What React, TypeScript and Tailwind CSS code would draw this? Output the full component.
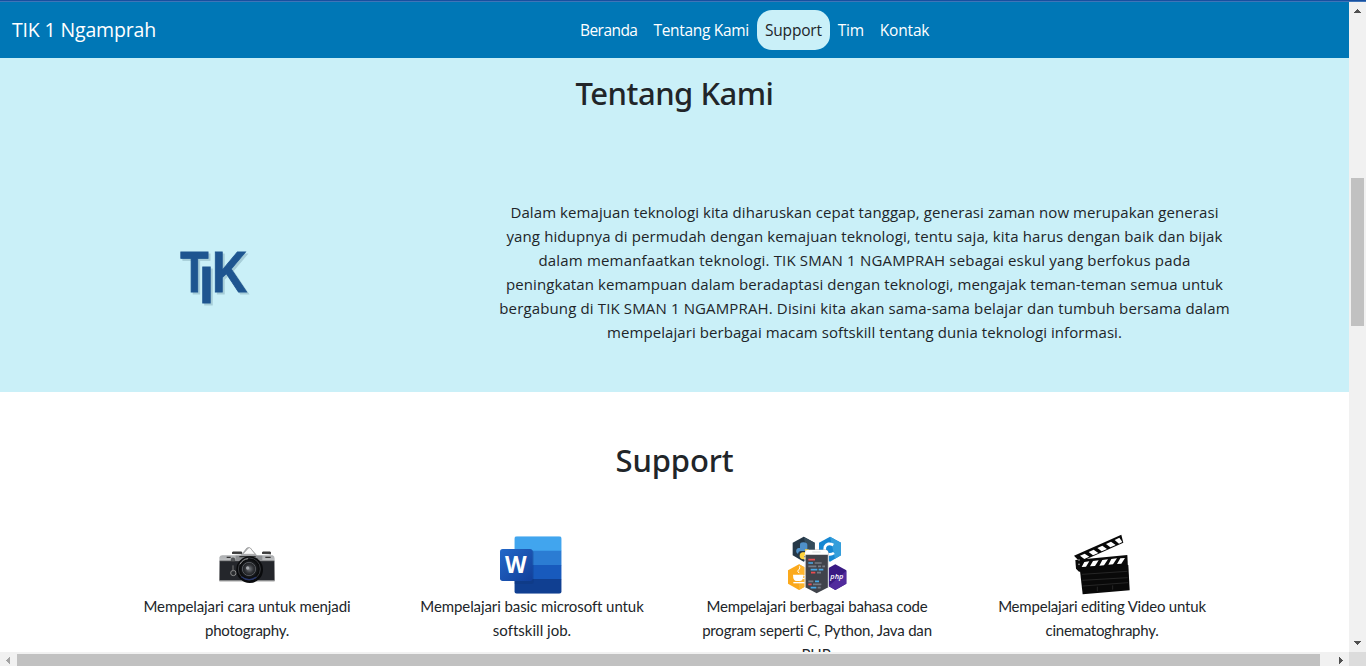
import { useLayoutEffect, useRef } from 'react';

/** One line of text whose tracking is adjusted to the given width. */
function Line({ text, width }: { text: string; width: number }) {
  const ref = useRef<HTMLSpanElement>(null);
  useLayoutEffect(() => {
    const el = ref.current;
    if (!el) return;
    el.style.letterSpacing = '0px';
    const natural = el.getBoundingClientRect().width;
    const gap = (width - natural) / text.length;
    el.style.letterSpacing = `${gap}px`;
  }, [text, width]);
  return (
    <span className="block whitespace-nowrap">
      <span ref={ref} className="inline-block">{text}</span>
    </span>
  );
}

const links = [
  { label: 'Beranda', width: 57.4 },
  { label: 'Tentang Kami', width: 95.6 },
  { label: 'Support', width: 56.8, active: true },
  { label: 'Tim', width: 26 },
  { label: 'Kontak', width: 49.5 },
];

const about = [
  { text: 'Dalam kemajuan teknologi kita diharuskan cepat tanggap, generasi zaman now merupakan generasi', width: 708 },
  { text: 'yang hidupnya di permudah dengan kemajuan teknologi, tentu saja, kita harus dengan baik dan bijak', width: 716 },
  { text: 'dalam memanfaatkan teknologi. TIK SMAN 1 NGAMPRAH sebagai eskul yang berfokus pada', width: 652 },
  { text: 'peningkatan kemampuan dalam beradaptasi dengan teknologi, mengajak teman-teman semua untuk', width: 717 },
  { text: 'bergabung di TIK SMAN 1 NGAMPRAH. Disini kita akan sama-sama belajar dan tumbuh bersama dalam', width: 730.5 },
  { text: 'mempelajari berbagai macam softskill tentang dunia teknologi informasi.', width: 515 },
];

function TikLogo() {
  return (
    <svg
      className="overflow-visible drop-shadow-[2.5px_2.5px_0.5px_rgba(60,100,120,0.25)]"
      width="75"
      height="65"
      viewBox="0 0 75 65"
      fill="#1e5590"
      stroke="#1e5590"
      strokeWidth="0.9"
      fontFamily="Liberation Sans, sans-serif"
      fontWeight="700"
    >
      <text transform="translate(.3 45) scale(.8 1)" fontSize="58">T</text>
      <text transform="translate(19.2 56.3)" fontSize="52">I</text>
      <text transform="translate(32 45) scale(.84 1)" fontSize="58">K</text>
    </svg>
  );
}

function Camera() {
  return (
    <svg width="85" height="60" viewBox="0 0 255 180">
      <defs>
        <linearGradient id="metal" x2="0" y2="1">
          <stop stopColor="#8e9092" /><stop offset=".45" stopColor="#c6c8ca" /><stop offset="1" stopColor="#777" />
        </linearGradient>
        <radialGradient id="lens">
          <stop stopColor="#777b80" /><stop offset=".35" stopColor="#36383c" /><stop offset=".65" stopColor="#17191c" /><stop offset="1" stopColor="#050607" />
        </radialGradient>
      </defs>
      <path d="M83 57v-6h27v7M173 57v-6h23v7" fill="#444" stroke="#333" strokeWidth="3" />
      <path d="M43 67q2-6 9-6h55l17-21q6-6 13 0l19 21h47q6 2 6 10v68H43z" fill="url(#metal)" />
      <path d="M113 58l17-19q3-2 6 0l15 19z" fill="#fafafa" stroke="#aaa" strokeWidth="3" />
      <path d="M44 78h164v57H44z" fill="#24262b" />
      <path d="M44 77h164M44 137h164" stroke="#8b8c8e" strokeWidth="3" />
      <path d="M92 62h80v15H92z" fill="#8d8f92" />
      <path d="M103 65h49M65 67h12M181 67h16" stroke="#333" strokeWidth="4" />
      <circle cx="84" cy="74" r="6" fill="#57595c" stroke="#222" />
      <circle cx="85" cy="114" r="8" fill="#292b2e" stroke="#888" strokeWidth="3" />
      <path d="M84 91v18" stroke="#777" strokeWidth="3" />
      <circle cx="134" cy="104" r="40" fill="#090a0c" />
      <circle cx="133" cy="102" r="33" fill="url(#lens)" stroke="#393b40" strokeWidth="3" />
      <circle cx="132" cy="102" r="20" fill="none" stroke="#56595e" strokeWidth="3" />
      <path d="M105 88q8-15 24-17" fill="none" stroke="#999" strokeWidth="3" />
      <circle cx="128" cy="99" r="5" fill="#a7aaae" />
      <path d="M109 125q23 17 45 1" fill="none" stroke="#27366b" strokeWidth="4" />
    </svg>
  );
}

function Word() {
  return (
    <svg width="85" height="70" viewBox="0 0 255 210">
      <defs>
        <clipPath id="page"><rect x="73" y="19" width="142" height="172" rx="7" /></clipPath>
        <linearGradient id="tile" x2="1" y2="1"><stop stopColor="#2368c8" /><stop offset="1" stopColor="#123f9a" /></linearGradient>
      </defs>
      <g clipPath="url(#page)">
        <path d="M73 19h142v44H73z" fill="#41a5ee" />
        <path d="M73 62h142v44H73z" fill="#2b7cd3" />
        <path d="M73 105h142v43H73z" fill="#185abd" />
        <path d="M73 147h142v44H73z" fill="#103f91" />
        <rect x="70" y="61" width="61" height="101" rx="7" fill="#0a316f" opacity=".25" />
      </g>
      <rect x="30" y="57" width="98" height="96" rx="8" fill="url(#tile)" />
      <text x="45" y="130" textLength="65" lengthAdjust="spacingAndGlyphs" fontFamily="Open Sans, sans-serif" fontSize="69" fontWeight="700" fill="#fff">W</text>
    </svg>
  );
}

function Languages() {
  return (
    <svg width="85" height="70" viewBox="0 0 255 210">
      <path d="M86 20l33 18v38l-33 19-33-19V38z" fill="#253746" />
      <path d="M86 20l33 18v38l-18 10z" fill="#344c5c" />
      <path d="M75 54V44q0-7 10-7 12 0 12 8v10q0 8-9 8H77q-7 0-8 8-7-3-5-12 2-6 11-6h13" fill="#4f91c9" />
      <path d="M90 58h10q5 1 5 10 0 10-6 10H87v4h12q-2 8-14 6-11-1-11-10 0-9 8-11h8z" fill="#ffd33d" />
      <path d="M165 20l33 18v38l-33 19-33-19V38z" fill="#1687d2" />
      <path d="M165 20l33 18v38l-18 10z" fill="#349edb" />
      <path d="M175 45q-18-9-25 5-5 20 12 23 8 1 15-4" fill="none" stroke="#fff" strokeWidth="8" />
      <path d="M72 103l33 18v40l-33 19-33-19v-40z" fill="#fba91c" />
      <path d="M72 103l33 18v40l-33 19z" fill="#ffb52e" />
      <path d="M54 134h31q0 19-11 19h-9q-11 0-11-19" fill="#fff" />
      <path d="M85 137h6q3 9-8 9M72 129q-8-6 0-11 5-4 1-9" fill="none" stroke="#fff" strokeWidth="3" />
      <path d="M55 158h34" stroke="#fff" strokeWidth="4" />
      <path d="M181 103l33 18v40l-33 19-33-19v-40z" fill="#391a83" />
      <path d="M214 122v39l-33 19-20-12z" fill="#512b9d" />
      <path d="M91 68q0-9 10-9h49q10 0 10 9v104l-35 18-34-18z" fill="#40434b" />
      <path d="M90 74v-6q0-9 10-9h50q10 0 10 9v6z" fill="#fff" />
      <path d="M90 74v97M160 74v97" stroke="#e7eaf0" strokeWidth="3" />
      <path d="M112 66h25" stroke="#ddd" strokeWidth="3" />
      <g strokeWidth="5">
        <path d="M100 89h20M108 128h13M100 163h10" stroke="#e84c50" />
        <path d="M100 99h14M107 119h20M131 119h14M120 154h12M107 173h17" stroke="#49a9e8" />
        <path d="M119 99h21M100 109h24M129 109h9M142 109h8M126 128h12M100 154h15M114 163h25M128 173h9" stroke="#777c87" />
      </g>
      <text x="166" y="147" textLength="39" lengthAdjust="spacingAndGlyphs" fontFamily="Open Sans, sans-serif" fontSize="22" fontStyle="italic" fontWeight="600" fill="#fff">php</text>
    </svg>
  );
}

function Clapper() {
  return (
    <svg width="85" height="70" viewBox="0 0 255 210">
      <path d="M42 77L184 14l6 24L60 96z" fill="#080808" />
      <g fill="#fff">
        <path d="M60 77l14-6 14 9-15 7zM86 66l15-7 14 10-16 7zM112 54l15-7 14 10-16 7zM138 42l15-7 14 10-16 7zM164 30l14-7 9 13-10 5z" />
      </g>
      <path d="M46 90l156-15 2 42-147 8-9-9z" fill="#090909" />
      <g fill="#fff">
        <path d="M73 96l15-2-10 16-13 1zM99 93l17-2-11 17-15 1zM127 90l17-2-12 18-14 1zM154 87l17-2-12 18-14 1zM181 85l14-1-11 17-13 1z" />
      </g>
      <path d="M59 113l146-8 4 76-141 12z" fill="#090909" />
      <path d="M66 133l136-9M67 151l136-8M68 168l136-10M112 170v14M158 166v13" stroke="#353535" strokeWidth="2" />
      <circle cx="57" cy="90" r="2.5" fill="#aaa" /><circle cx="57" cy="103" r="2.5" fill="#aaa" />
    </svg>
  );
}

const supports = [
  { icon: <Camera />, pad: 'pt-[5px]', lines: [{ text: 'Mempelajari cara untuk menjadi', width: 207 }, { text: 'photography.', width: 84 }] },
  { icon: <Word />, pad: '', lines: [{ text: 'Mempelajari basic microsoft untuk', width: 223 }, { text: 'softskill job.', width: 78 }] },
  { icon: <Languages />, pad: '', lines: [{ text: 'Mempelajari berbagai bahasa code', width: 221 }, { text: 'program seperti C, Python, Java dan', width: 230 }, { text: 'PHP.', width: 31 }] },
  { icon: <Clapper />, pad: '', lines: [{ text: 'Mempelajari editing Video untuk', width: 208 }, { text: 'cinematoghraphy.', width: 113 }] },
];

function VerticalScrollbar() {
  return (
    <div className="flex w-[17px] shrink-0 flex-col items-center bg-[#f1f1f1]">
      <svg width="17" height="17" shapeRendering="crispEdges"><path d="M5 11h7v-1h-1V9h-1V8H9V7H8v1H7v1H6v1H5z" fill="#505050" /></svg>
      <div className="mt-[159px] h-[148px] w-[13px] bg-[#c1c1c1]" />
      <svg className="mt-auto" width="17" height="17" shapeRendering="crispEdges"><path d="M5 6h7v1h-1v1h-1v1H9v1H8V9H7V8H6V7H5z" fill="#505050" /></svg>
    </div>
  );
}

function HorizontalScrollbar() {
  return (
    <div className="flex h-[14px] shrink-0 bg-[#f1f1f1]">
      <svg width="17" height="14" shapeRendering="crispEdges"><path d="M10 5v7H9v-1H8v-1H7V9H6V8h1V7h1V6h1V5z" fill="#a3a3a3" /></svg>
      <div className="mt-[2px] h-3 w-[1303px] bg-[#c1c1c1]" />
      <svg className="ml-auto" width="17" height="14" shapeRendering="crispEdges"><path d="M7 5v7h1v-1h1v-1h1V9h1V8h-1V7H9V6H8V5z" fill="#505050" /></svg>
      <div className="w-[17px] bg-[#dcdcdc]" />
    </div>
  );
}

export default function App() {
  return (
    <div className="flex h-[666px] w-[1366px] flex-col overflow-hidden bg-white font-['Open_Sans',sans-serif] text-[#212529]">
      <div className="h-[2px] shrink-0 border-b border-[#3f74b8] bg-[#1750a0]" />
      <div className="flex min-h-0 flex-1">
        <main className="flex min-w-0 flex-1 flex-col overflow-hidden">
          <nav className="flex h-14 shrink-0 items-center bg-[#0077b6] text-white">
            <div className="w-[572px] pl-3 text-[19.5px] leading-[30px]">
              <Line text="TIK 1 Ngamprah" width={144} />
            </div>
            {links.map((l) => (
              <a
                key={l.label}
                className={
                  l.active
                    ? 'rounded-[15px] bg-[#caf0f8] px-2 py-2 text-[15.5px] leading-6 text-[#212529]'
                    : 'px-2 py-2 text-[15.5px] leading-6'
                }
              >
                <Line text={l.label} width={l.width} />
              </a>
            ))}
          </nav>

          <section className="flex h-[334px] shrink-0 flex-col bg-[#caf0f8]">
            <h2 className="mt-4 text-center font-['Noto_Sans',sans-serif] text-[31px] leading-[38px] font-medium">
              <Line text="Tentang Kami" width={198} />
            </h2>
            <div className="mx-auto mt-[88px] flex w-[1140px]">
              <div className="w-[380px] pt-[47px] pl-[75px]">
                <TikLogo />
              </div>
              <p className="w-[760px] text-center text-[15px] leading-6">
                {about.map((l) => <Line key={l.text} {...l} />)}
              </p>
            </div>
          </section>

          <section className="flex shrink-0 flex-col">
            <h2 className="mt-[49px] text-center font-['Noto_Sans',sans-serif] text-[31px] leading-[38px] font-medium">
              <Line text="Support" width={118} />
            </h2>
            <div className="mx-auto mt-[51px] flex w-[1140px]">
              {supports.map((s, i) => (
                <div key={i} className="flex w-[285px] flex-col items-center">
                  <div className={`h-16 ${s.pad}`}>{s.icon}</div>
                  <p className="text-center font-['Lato',sans-serif] text-[15px] leading-6">
                    {s.lines.map((l) => <Line key={l.text} {...l} />)}
                  </p>
                </div>
              ))}
            </div>
          </section>
        </main>
        <VerticalScrollbar />
      </div>
      <HorizontalScrollbar />
    </div>
  );
}
